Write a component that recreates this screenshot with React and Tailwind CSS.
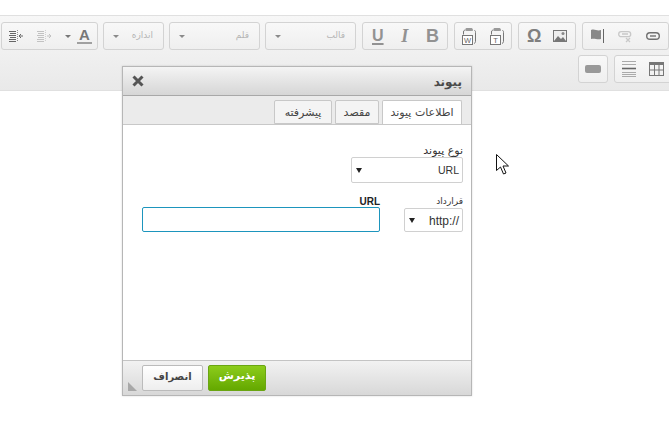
const F = "font-['DejaVu_Sans','Noto_Sans',sans-serif]";

function Group({ className = "", children }) {
  return (
    <div className={`h-[28px] flex items-center shrink-0 rounded-[3px] border border-[#d3d3d3] bg-gradient-to-b from-[#f8f8f8] to-[#efefef] ${className}`}>
      {children}
    </div>
  );
}

function Caret({ c = "#8a8a8a" }) {
  return <span className="w-0 h-0 border-x-[3px] border-x-transparent border-t-[3px] block" style={{ borderTopColor: c }} />;
}

function Combo({ w, label }) {
  return (
    <Group className={`${w} justify-between pl-[9px] pr-[10px]`}>
      <Caret />
      <span dir="rtl" className={`${F} text-[9px] text-[#b5b5b5]`}>{label}</span>
    </Group>
  );
}

function Indent({ c, flip }) {
  return (
    <svg width="14" height="14" viewBox="0 0 14 14" stroke={c} fill="none" strokeWidth="1">
      <path d="M0 2.5h7M1 4.5h6M0 6.5h7M1 8.5h6M0 10.5h7M0 12.5h7" />
      <path d="M8.5 1v12" strokeDasharray="1 1" opacity="0.7" />
      <path d={flip ? "M10 7h4M12 5l2 2-2 2" : "M10 7h4M12 5l-2 2 2 2"} />
    </svg>
  );
}

function Paste({ letter }) {
  return (
    <svg width="14" height="18" viewBox="0 0 14 18" fill="none" stroke="#777" strokeWidth="1">
      <path d="M1.5 4.5v3M12.5 3.5c1 0 1 1 1 2v9c0 1-.5 1.5-1.5 2" />
      <path d="M1.5 5c0-1.5 1-2 2-2M10 3h1" />
      <rect x="3.5" y="1" width="7" height="3" fill="#999" stroke="none" rx="1" />
      <rect x="0.5" y="8.5" width="10" height="9" fill="#fff" />
      <text x="5.5" y="16" textAnchor="middle" fontSize="7.5" fill="#666" stroke="none" fontFamily="Liberation Sans">{letter}</text>
    </svg>
  );
}

function Toolbar() {
  return (
    <div className="h-[76px] mt-[15px] border-y border-[#e0e0e0] bg-gradient-to-b from-[#f7f7f7] to-[#e9e9e9] overflow-hidden pt-[6px]">
      <div className="flex w-[688px] pl-[1px] h-[28px]">
        <div className="flex gap-[5px]">
          <Group className="w-[97px] pl-[7px] pr-[5px] justify-between">
            <Indent c="#666" />
            <span className="ml-[13px]"><Indent c="#c2c2c2" flip /></span>
            <span className="ml-[13px]"><Caret c="#777" /></span>
            <span className="flex flex-col items-center ml-[5px]">
              <span className="font-['Liberation_Sans'] font-bold text-[15px] leading-[13px] text-[#777]">A</span>
              <span className="block w-[15px] h-[2px] bg-[#a0a0a0] mt-[1px]" />
            </span>
          </Group>
          <Combo w="w-[61px]" label="اندازه" />
          <Combo w="w-[91px]" label="قلم" />
          <Combo w="w-[91px]" label="قالب" />
          <Group className="w-[86px] ml-[1px] justify-between pl-[9px] pr-[8px] text-[#929292] font-['Liberation_Sans'] font-bold">
            <span className="text-[16px] leading-[16px] underline decoration-2 underline-offset-2">U</span>
            <span className="font-['Liberation_Serif'] italic text-[18px] leading-none">I</span>
            <span className="text-[18px] leading-none">B</span>
          </Group>
          <Group className="w-[58px] ml-[1px] pl-[7px] gap-[14px]">
            <Paste letter="W" />
            <Paste letter="T" />
          </Group>
          <Group className="w-[58px] ml-[1px] pl-[8px] gap-[12px]">
            <span className="font-['Liberation_Sans'] text-[18px] leading-none text-[#7f7f7f] w-[14px] font-bold">Ω</span>
            <svg width="14" height="12" viewBox="0 0 14 12">
              <rect x="0.5" y="0.5" width="13" height="11" fill="#eee" stroke="#777" />
              <path d="M1 11l4-5 3 3 2-2 3 4z" fill="#777" />
              <circle cx="10" cy="3.5" r="1.5" fill="#888" />
            </svg>
          </Group>
          <Group className="w-[87px] ml-[1px] pl-[8px] gap-[14px]">
            <svg width="13" height="14" viewBox="0 0 13 14">
              <path d="M0 1c4-1.5 6 1.5 10 0v9c-4 1-6-1-10 0z" fill="#888" />
              <path d="M12.5 0v14" stroke="#666" />
            </svg>
            <svg width="14" height="14" viewBox="0 0 14 14" fill="none" stroke="#c8c8c8" strokeWidth="1.3">
              <rect x="0.7" y="2.7" width="12" height="5" rx="2.5" />
              <path d="M4 5h6M8 9l4 4M12 9l-4 4" />
            </svg>
            <svg width="14" height="10" viewBox="0 0 14 10" fill="none" stroke="#707070" strokeWidth="1.4">
              <rect x="0.7" y="1.7" width="12.6" height="6.6" rx="3.3" />
              <path d="M4 5h6" />
            </svg>
          </Group>
        </div>
      </div>
      <div className="flex justify-end gap-[6px] w-[688px] mt-[5px] h-[28px]">
        <Group className="w-[30px] justify-center">
          <span className="block w-[16px] h-[8px] rounded-[2px] bg-[#999]" />
        </Group>
        <Group className="w-[74px] pl-[7px] gap-[13px]">
          <svg width="14" height="16" viewBox="0 0 14 16" stroke="#aaa">
            <path d="M0 .5h14M0 3.5h14M0 11.5h14M0 13.5h14M0 15.5h14" strokeWidth="1" />
            <path d="M0 7.5h14" stroke="#666" strokeWidth="1.6" />
          </svg>
          <svg width="15" height="14" viewBox="0 0 15 14" fill="none" stroke="#777">
            <rect x="0.5" y="0.5" width="14" height="13" />
            <path d="M0 1.5h15M0 2.5h15" />
            <path d="M5.5 3v10M10 3v10M0 8h15" />
          </svg>
        </Group>
      </div>
    </div>
  );
}

function Tab({ w, active, children }) {
  return (
    <div
      dir="rtl"
      className={`${w} ${F} flex items-center justify-center text-[11px] text-[#444] border border-[#c8c8c8] rounded-t-[2px] pt-[2px] ${active ? "h-[24px] bg-white border-b-0" : "h-[24px] bg-[#f4f4f4]"}`}
    >
      {children}
    </div>
  );
}

function SelectBox({ className, value, small }) {
  return (
    <div className={`flex items-center justify-between bg-white border border-[#d0d0d0] rounded-[2px] font-['Liberation_Sans'] text-[#333] pl-[4px] pr-[3px] ${small ? "text-[10.5px]" : "text-[12px]"} ${className}`}>
      <span className="block w-0 h-0 border-x-[3px] border-x-transparent border-t-[5px] border-t-[#222]" />
      <span className="pt-[1px]">{value}</span>
    </div>
  );
}

function Dialog() {
  return (
    <div className="absolute left-[122px] top-[66px] w-[350px] h-[330px] flex flex-col border border-[#b6b6b6] bg-white shadow-[0_0_2px_rgba(0,0,0,0.15)]">
      <div className="h-[29px] shrink-0 flex items-center justify-between px-[9px] border-b border-[#a8a8a8] bg-gradient-to-b from-[#f4f4f4] to-[#d6d6d6]">
        <svg width="12" height="12" viewBox="0 0 12 12" stroke="#555" strokeWidth="3">
          <path d="M1.5 1.5l9 9M10.5 1.5l-9 9" />
        </svg>
        <span dir="rtl" className={`${F} font-bold text-[12px] text-[#4a4a4a] pt-[2px]`}>پیوند</span>
      </div>
      <div className="h-[29px] shrink-0 flex items-end justify-end gap-[3px] pr-[9px] bg-[#ebebeb] border-b border-[#c8c8c8]">
        <Tab w="w-[58px]">پیشرفته</Tab>
        <Tab w="w-[44px]">مقصد</Tab>
        <Tab w="w-[80px]" active>اطلاعات پیوند</Tab>
      </div>
      <div className="flex-1 relative">
        <div className="pt-[20px] pr-[8px] pl-[19px] flex flex-col items-end">
          <div dir="rtl" className={`${F} text-[11px] leading-[12px] text-[#333]`}>نوع پیوند</div>
          <SelectBox className="w-[112px] h-[26px]" value="URL" small />
          <div className="w-full flex justify-between items-start mt-[12px]">
            <div className="w-[238px] flex flex-col items-end">
              <div className="font-['Liberation_Sans'] font-bold text-[10px] leading-[13px] text-[#222] h-[12px]">URL</div>
              <div className="w-full h-[25px] bg-white border border-[#1d95bd] rounded-[2px]" />
            </div>
            <div className="w-[59px] flex flex-col items-end">
              <div dir="rtl" className={`${F} text-[9px] leading-[13px] text-[#333] h-[13px]`}>قرارداد</div>
              <SelectBox className="w-[59px] h-[24px]" value="http://" />
            </div>
          </div>
        </div>
      </div>
      <div className="h-[35px] shrink-0 relative flex items-start gap-[5px] pl-[19px] pt-[4px] bg-gradient-to-b from-[#f2f2f2] to-[#d8d8d8] border-t border-[#c4c4c4]">
        <button className={`${F} w-[61px] h-[26px] pb-[3px] text-[10px] font-bold text-[#444] bg-gradient-to-b from-white to-[#eeeeee] border border-[#bbb] rounded-[2px]`}>انصراف</button>
        <button className={`${F} w-[58px] h-[26px] pb-[3px] text-[11px] font-bold text-white bg-gradient-to-b from-[#8ccc1a] to-[#64a800] border border-[#6aa512] rounded-[2px]`}>پذیرش</button>
        <svg className="absolute left-[5px] bottom-[4px]" width="9" height="9" viewBox="0 0 9 9">
          <path d="M0 0l9 9H0z" fill="#a8a8a8" />
        </svg>
      </div>
    </div>
  );
}

export default function App() {
  return (
    <div className="relative w-[669px] h-[442px] bg-white overflow-hidden">
      <Toolbar />
      <Dialog />
      <svg className="absolute left-[496px] top-[154px]" width="14" height="22" viewBox="0 0 14 22">
        <path d="M.5.5v16l4-3.5 3 7 2.5-1-3-7h5.5z" fill="#fff" stroke="#111" />
      </svg>
    </div>
  );
}
